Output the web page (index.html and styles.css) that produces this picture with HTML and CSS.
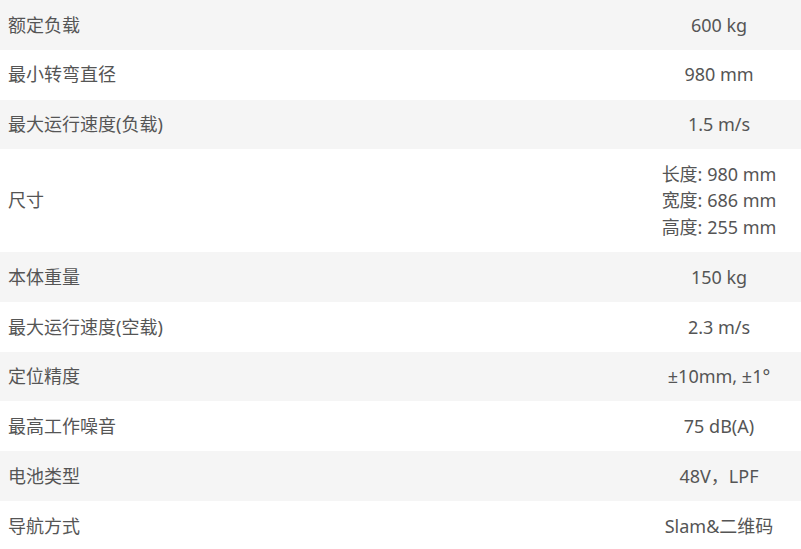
FILE: index.html
```html
<!DOCTYPE html>
<html lang="zh-CN">
<head>
<meta charset="utf-8">
<title>参数</title>
<link rel="stylesheet" href="styles.css">
</head>
<body>
<table class="spec">
  <tbody>
    <tr class="odd"><td class="label">额定负载</td><td class="value">600 kg</td></tr>
    <tr><td class="label">最小转弯直径</td><td class="value">980 mm</td></tr>
    <tr class="odd"><td class="label">最大运行速度(负载)</td><td class="value">1.5 m/s</td></tr>
    <tr><td class="label">尺寸</td><td class="value">长度: 980 mm<br>宽度: 686 mm<br>高度: 255 mm</td></tr>
    <tr class="odd"><td class="label">本体重量</td><td class="value">150 kg</td></tr>
    <tr><td class="label">最大运行速度(空载)</td><td class="value">2.3 m/s</td></tr>
    <tr class="odd"><td class="label">定位精度</td><td class="value">±10mm, ±1°</td></tr>
    <tr><td class="label">最高工作噪音</td><td class="value">75 dB(A)</td></tr>
    <tr class="odd"><td class="label">电池类型</td><td class="value">48V，LPF</td></tr>
    <tr><td class="label">导航方式</td><td class="value">Slam&amp;二维码</td></tr>
  </tbody>
</table>
</body>
</html>
```

FILE: styles.css
```css
html, body {
  margin: 0;
  padding: 0;
  background: #ffffff;
}
body {
  font-family: "Noto Sans", "Noto Sans CJK SC", sans-serif;
  font-size: 18px;
  color: #555555;
}
.spec {
  width: 801px;
  border-collapse: collapse;
  border-spacing: 0;
  table-layout: fixed;
}
.spec td {
  padding: 11.65px 0;
  line-height: 26.5px;
  vertical-align: middle;
}
.spec .odd td {
  background: #f5f5f5;
}
.label {
  padding-left: 8px !important;
  text-align: left;
}
.value {
  width: 164px;
  text-align: center;
}
```
